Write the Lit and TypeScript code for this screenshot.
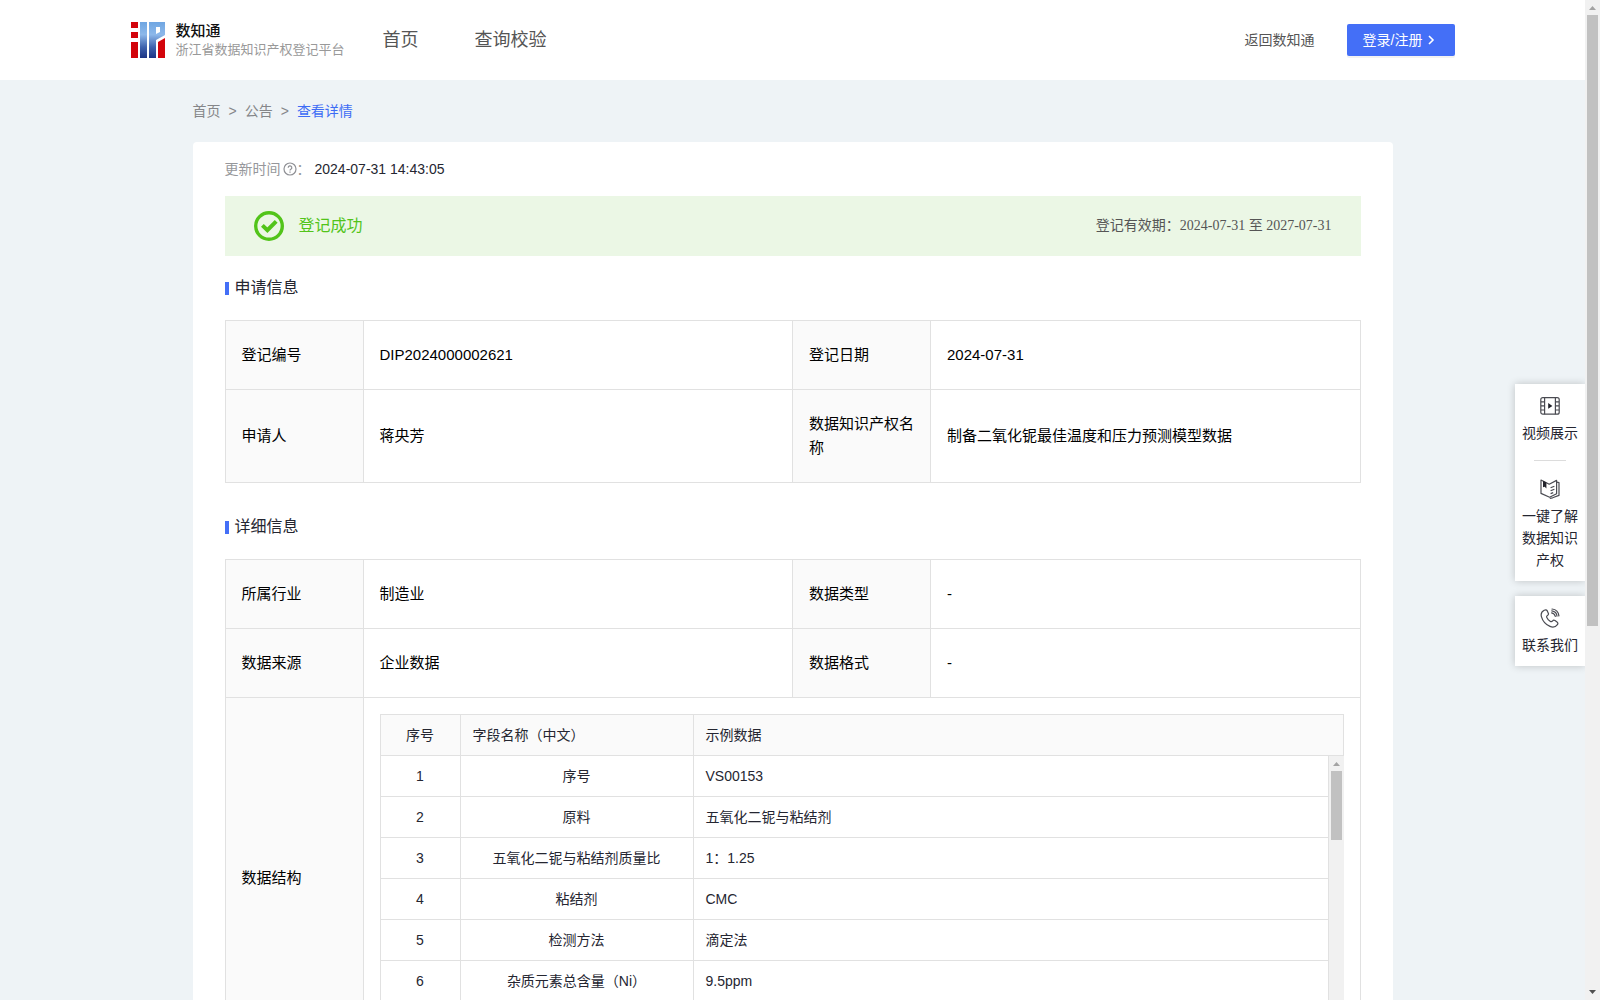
import { LitElement, html, css, svg } from "lit";
import { customElement, property } from "lit/decorators.js";

interface Field {
  label: string;
  value: string;
}

const applyRows: Field[][] = [
  [
    { label: "登记编号", value: "DIP2024000002621" },
    { label: "登记日期", value: "2024-07-31" },
  ],
  [
    { label: "申请人", value: "蒋央芳" },
    { label: "数据知识产权名称", value: "制备二氧化铌最佳温度和压力预测模型数据" },
  ],
];

const detailRows: Field[][] = [
  [
    { label: "所属行业", value: "制造业" },
    { label: "数据类型", value: "-" },
  ],
  [
    { label: "数据来源", value: "企业数据" },
    { label: "数据格式", value: "-" },
  ],
];

const structure: [string, string][] = [
  ["序号", "VS00153"],
  ["原料", "五氧化二铌与粘结剂"],
  ["五氧化二铌与粘结剂质量比", "1：1.25"],
  ["粘结剂", "CMC"],
  ["检测方法", "滴定法"],
  ["杂质元素总含量（Ni）", "9.5ppm"],
];

const logo = svg`
  <svg class="logo" viewBox="0 0 34 36" aria-hidden="true">
    <defs>
      <linearGradient id="blue" x1="0" y1="0" x2="0" y2="36" gradientUnits="userSpaceOnUse">
        <stop offset="0" stop-color="#6fa6e2" />
        <stop offset="0.35" stop-color="#8db8ea" />
        <stop offset="0.7" stop-color="#3f62ad" />
        <stop offset="1" stop-color="#1d3585" />
      </linearGradient>
    </defs>
    <path fill="#d3040b" d="M0 0h7v6H0zM0 10h7v6H0zM0 20h7v16H0zM27 20l7-4v20h-7z" />
    <path fill="url(#blue)" d="M9 0h7v36H9z" />
    <path fill="url(#blue)" fill-rule="evenodd" d="M18 0h16v13l-9 5v18h-7zM25 5v7l4-2V5z" />
  </svg>`;

const helpIcon = svg`
  <svg class="help" viewBox="0 0 14 14" fill="none" stroke="#8f9095" stroke-width="1.2" role="img" aria-label="说明">
    <circle cx="7" cy="7" r="6" />
    <path d="M5.2 5.7a1.8 1.8 0 1 1 2.7 1.5c-.6.4-.9.7-.9 1.3" />
    <path d="M7 9.5v1.2" />
  </svg>`;

const successIcon = svg`
  <svg class="success" viewBox="0 0 30 30" fill="none" stroke="#52c41a" aria-hidden="true">
    <circle cx="15" cy="15" r="13.3" stroke-width="3.4" />
    <path d="M8.4 14.4l5 4.8 8.8-8.8" stroke-width="4" />
  </svg>`;

const chevron = svg`
  <svg class="chevron" viewBox="0 0 14 14" fill="none" stroke="#fff" stroke-width="1.6" aria-hidden="true">
    <path d="M5 3l4 4-4 4" />
  </svg>`;

const videoIcon = svg`
  <svg class="tool-icon" viewBox="0 0 20 20" fill="none" stroke="#4a4b52" stroke-width="1.2" aria-hidden="true">
    <rect x="0.8" y="1.6" width="18.4" height="16.6" rx="2" />
    <path d="M4.6 1.6v16.6M15.4 1.6v16.6" />
    <path d="M1 5.8h3.6M1 9.9h3.6M1 14h3.6M15.4 5.8H19M15.4 9.9H19M15.4 14H19" />
    <path d="M8.2 7l4.2 2.9-4.2 2.9z" fill="#22232b" stroke="none" />
  </svg>`;

const bookIcon = svg`
  <svg class="tool-icon" viewBox="0 0 20 20" fill="none" stroke="#4a4b52" stroke-width="1.2" stroke-linejoin="round" aria-hidden="true">
    <path d="M1 1l8.200 4.200L16.600 1.400v13.400L9.600 18.200 1 14.400z" />
    <path d="M16.800 3.200l2.200.4v12.800l-6.400 2.400-2.800.6" />
    <path d="M10.600 8.800l3.800-1.600M10.600 11.800l3.800-1.600M10.600 14.600l2.600-1" />
    <path d="M3 1.800l3.400 1.800v6L4.700 7.800 3 8.200z" fill="#22232b" stroke="none" />
  </svg>`;

const phoneIcon = svg`
  <svg class="tool-icon" viewBox="0 0 20 20" fill="none" stroke="#4a4b52" stroke-width="1.2" stroke-linecap="round" aria-hidden="true">
    <path d="M4.2 2.2C1.8 3.4.7 5.8 1.4 8.6c1.3 4.6 4.4 8 8.6 9.8 2.8 1.2 5.6.6 7.4-1.8.7-.9.5-1.9-.4-2.6l-2-1.4c-.9-.6-1.8-.5-2.4.3-.8 1-1.5 1-2.5.3-1.500-1-2.600-2.300-3.300-3.800-.4-.9-.2-1.500.700-2 .9-.5 1.200-1.300.8-2.200l-1-2.300c-.5-.9-1.600-1.200-3.100-.7z" />
    <path d="M11.600 4.800c2 .4 3.300 1.700 3.700 3.700M12 1c3.900.4 6.500 3 6.900 6.900M11.800 2.900c2.900.4 4.900 2.300 5.200 5.200" />
  </svg>`;

@customElement("scroll-rail")
export class ScrollRail extends LitElement {
  /** Share of the track that the thumb takes, in percent. */
  @property({ type: Number }) thumb = 50;

  static styles = css`
    :host {
      display: flex;
      flex-direction: column;
      flex: none;
      width: 15px;
      background: #f1f1f1;
    }
    .arrow {
      flex: none;
      width: 15px;
      height: 15px;
      display: block;
    }
    .track {
      flex: 1;
      padding: 0 2px;
    }
    .thumb {
      background: #c1c1c1;
    }
  `;

  render() {
    return html`
      <svg class="arrow" viewBox="0 0 15 15" aria-hidden="true"><path d="M4 10l3.500-4L11 10z" fill="#a3a3a3" /></svg>
      <div class="track"><div class="thumb" style="height:${this.thumb}%"></div></div>
      <svg class="arrow" viewBox="0 0 15 15" aria-hidden="true"><path d="M4 5l3.500 4L11 5z" fill="#505050" /></svg>
    `;
  }
}

@customElement("app-root")
export class AppRoot extends LitElement {
  static styles = css`
    :host {
      display: block;
      font-family: "Liberation Sans", "Noto Sans CJK SC", sans-serif;
      font-size: 14px;
      line-height: 22px;
      color: #252631;
    }
    * {
      box-sizing: border-box;
    }
    a {
      color: inherit;
      text-decoration: none;
    }
    .window {
      position: relative;
      display: flex;
      height: 100vh;
      overflow: hidden;
      background: #eef3f6;
    }
    .page {
      flex: 1;
      min-width: 0;
      overflow-y: auto;
      scrollbar-width: none;
    }

    .header {
      background: #fff;
    }
    .header-inner {
      display: flex;
      align-items: center;
      max-width: 1324px;
      height: 80px;
      margin: 0 auto;
    }
    .brand {
      display: flex;
      align-items: center;
      gap: 11px;
    }
    .logo {
      width: 34px;
      height: 36px;
    }
    .brand-text {
      display: flex;
      flex-direction: column;
    }
    .brand-name {
      font-size: 15px;
      line-height: 20px;
      font-weight: 500;
      color: #111;
    }
    .brand-sub {
      font-size: 13px;
      line-height: 18px;
      color: #999;
    }
    .nav {
      display: flex;
      gap: 56px;
      margin-left: 38px;
      font-size: 18px;
      line-height: 24px;
      color: #555;
    }
    .actions {
      display: flex;
      align-items: center;
      gap: 32px;
      margin-left: auto;
      color: #555;
    }
    .login {
      display: flex;
      align-items: center;
      gap: 2px;
      width: 108px;
      height: 32px;
      padding: 0 16px;
      border: 0;
      border-radius: 2px;
      background: #446ff7;
      box-shadow: 0 2px 0 rgba(0, 0, 0, 0.05);
      color: #fff;
      font: inherit;
      white-space: nowrap;
    }
    .chevron {
      flex: none;
      width: 14px;
      height: 14px;
    }

    .content {
      max-width: 1200px;
      margin: 0 auto;
      padding-bottom: 48px;
    }
    .crumbs {
      display: flex;
      gap: 8px;
      padding: 20px 0;
      color: #858689;
    }
    .crumbs .current {
      color: #3d6cf5;
    }
    .card {
      padding: 16px 32px 32px;
      border-radius: 4px;
      background: #fff;
    }
    .updated {
      display: flex;
      align-items: center;
      color: #96979b;
    }
    .updated time {
      margin-left: 4px;
      color: #252631;
    }
    .help {
      width: 14px;
      height: 14px;
      margin-left: 2px;
    }
    .banner {
      display: flex;
      align-items: center;
      gap: 15px;
      height: 60px;
      margin-top: 16px;
      padding: 0 29px;
      background: #ebf7e5;
    }
    .success {
      width: 30px;
      height: 30px;
    }
    .banner-title {
      font-size: 16px;
      line-height: 24px;
      color: #52c41a;
    }
    .validity {
      margin-left: auto;
      font-family: "Liberation Serif", "Noto Sans CJK SC", serif;
      color: #555;
    }

    .section-title {
      display: flex;
      align-items: center;
      gap: 6px;
      margin: 20px 0;
      font-size: 16px;
      line-height: 24px;
      font-weight: 400;
    }
    .section-title::before {
      content: "";
      width: 4px;
      height: 13px;
      background: #446ff7;
    }
    .section + .section {
      margin-top: 32px;
    }
    .info {
      width: 100%;
      table-layout: fixed;
      border-collapse: collapse;
      font-size: 15px;
      line-height: 24px;
      color: #000;
    }
    .info-label,
    .info-value {
      padding: 22px 15px 22px 16px;
      border: 1px solid #e1e1e1;
      text-align: left;
      font-weight: 400;
    }
    .info-label {
      background: #fafafa;
    }
    .col-label {
      width: 138px;
    }
    .info-nested {
      padding: 16px;
      border: 1px solid #e1e1e1;
    }

    .grid {
      width: 100%;
      table-layout: fixed;
      border-collapse: separate;
      border-spacing: 0;
      border-left: 1px solid #e1e1e1;
      font-size: 14px;
      line-height: 22px;
      color: #252631;
    }
    .grid-head {
      border-top: 1px solid #e1e1e1;
      background: #fafafa;
    }
    .col-index {
      width: 80px;
    }
    .col-name {
      width: 233px;
    }
    .cell {
      padding: 9px 12px;
      border-right: 1px solid #e1e1e1;
      border-bottom: 1px solid #e1e1e1;
      text-align: left;
      font-weight: 400;
    }
    .center {
      text-align: center;
    }
    .grid-body {
      display: flex;
      height: 286px;
      overflow: hidden;
    }
    .grid-rows {
      flex: 1;
      min-width: 0;
    }

    .tools {
      position: absolute;
      top: 384px;
      right: 15px;
      width: 70px;
      display: flex;
      flex-direction: column;
      gap: 15px;
      clip-path: inset(-16px 0 -16px -16px);
    }
    .tool-box {
      display: flex;
      flex-direction: column;
      padding: 12px 7px 10px;
      background: #fff;
      box-shadow: 0 0 8px rgba(0, 0, 0, 0.2);
    }
    .tool {
      display: flex;
      flex-direction: column;
      align-items: center;
      gap: 6px;
      padding: 0;
      border: 0;
      background: none;
      color: #252631;
      font: inherit;
      text-align: center;
    }
    .tool-icon {
      width: 20px;
      height: 20px;
    }
    .tool-rule {
      width: 32px;
      height: 1px;
      margin: 16px auto 18px;
      border: 0;
      background: #dcdcdc;
    }
  `;

  private fieldRow(row: Field[]) {
    return html`<tr>
      ${row.map(
        (f) => html`<th class="info-label" scope="row">${f.label}</th><td class="info-value">${f.value}</td>`
      )}
    </tr>`;
  }

  private infoCols() {
    return html`<colgroup><col class="col-label" /><col /><col class="col-label" /><col /></colgroup>`;
  }

  private gridCols() {
    return html`<colgroup><col class="col-index" /><col class="col-name" /><col /></colgroup>`;
  }

  render() {
    return html`
      <div class="window">
        <div class="page">
          <header class="header">
            <div class="header-inner">
              <a class="brand" href="#">
                ${logo}
                <span class="brand-text">
                  <span class="brand-name">数知通</span>
                  <span class="brand-sub">浙江省数据知识产权登记平台</span>
                </span>
              </a>
              <nav class="nav"><a href="#">首页</a><a href="#">查询校验</a></nav>
              <div class="actions">
                <a href="#">返回数知通</a>
                <button class="login" type="button"><span>登录/注册</span>${chevron}</button>
              </div>
            </div>
          </header>

          <main class="content">
            <nav class="crumbs">
              <a href="#">首页</a><span>&gt;</span><a href="#">公告</a><span>&gt;</span>
              <a class="current" href="#">查看详情</a>
            </nav>
            <div class="card">
              <div class="updated">
                <span>更新时间</span>${helpIcon}<span>：</span><time>2024-07-31 14:43:05</time>
              </div>
              <div class="banner">
                ${successIcon}
                <span class="banner-title">登记成功</span>
                <span class="validity">登记有效期：2024-07-31 至 2027-07-31</span>
              </div>

              <section class="section">
                <h2 class="section-title">申请信息</h2>
                <table class="info">
                  ${this.infoCols()}
                  <tbody>${applyRows.map((r) => this.fieldRow(r))}</tbody>
                </table>
              </section>

              <section class="section">
                <h2 class="section-title">详细信息</h2>
                <table class="info">
                  ${this.infoCols()}
                  <tbody>
                    ${detailRows.map((r) => this.fieldRow(r))}
                    <tr>
                      <th class="info-label" scope="row">数据结构</th>
                      <td class="info-nested" colspan="3">
                        <table class="grid grid-head">
                          ${this.gridCols()}
                          <thead>
                            <tr>
                              <th class="cell center" scope="col">序号</th>
                              <th class="cell" scope="col">字段名称（中文）</th>
                              <th class="cell" scope="col">示例数据</th>
                            </tr>
                          </thead>
                        </table>
                        <div class="grid-body">
                          <div class="grid-rows">
                            <table class="grid">
                              ${this.gridCols()}
                              <tbody>
                                ${structure.map(
                                  ([name, sample], i) => html`<tr>
                                    <td class="cell center">${i + 1}</td>
                                    <td class="cell center">${name}</td>
                                    <td class="cell">${sample}</td>
                                  </tr>`
                                )}
                              </tbody>
                            </table>
                          </div>
                          <scroll-rail .thumb=${27}></scroll-rail>
                        </div>
                      </td>
                    </tr>
                  </tbody>
                </table>
              </section>
            </div>
          </main>
        </div>
        <scroll-rail .thumb=${63}></scroll-rail>

        <aside class="tools">
          <div class="tool-box">
            <button class="tool" type="button">${videoIcon}<span>视频展示</span></button>
            <hr class="tool-rule" />
            <button class="tool" type="button">${bookIcon}<span>一键了解数据知识产权</span></button>
          </div>
          <div class="tool-box">
            <button class="tool" type="button">${phoneIcon}<span>联系我们</span></button>
          </div>
        </aside>
      </div>
    `;
  }
}
